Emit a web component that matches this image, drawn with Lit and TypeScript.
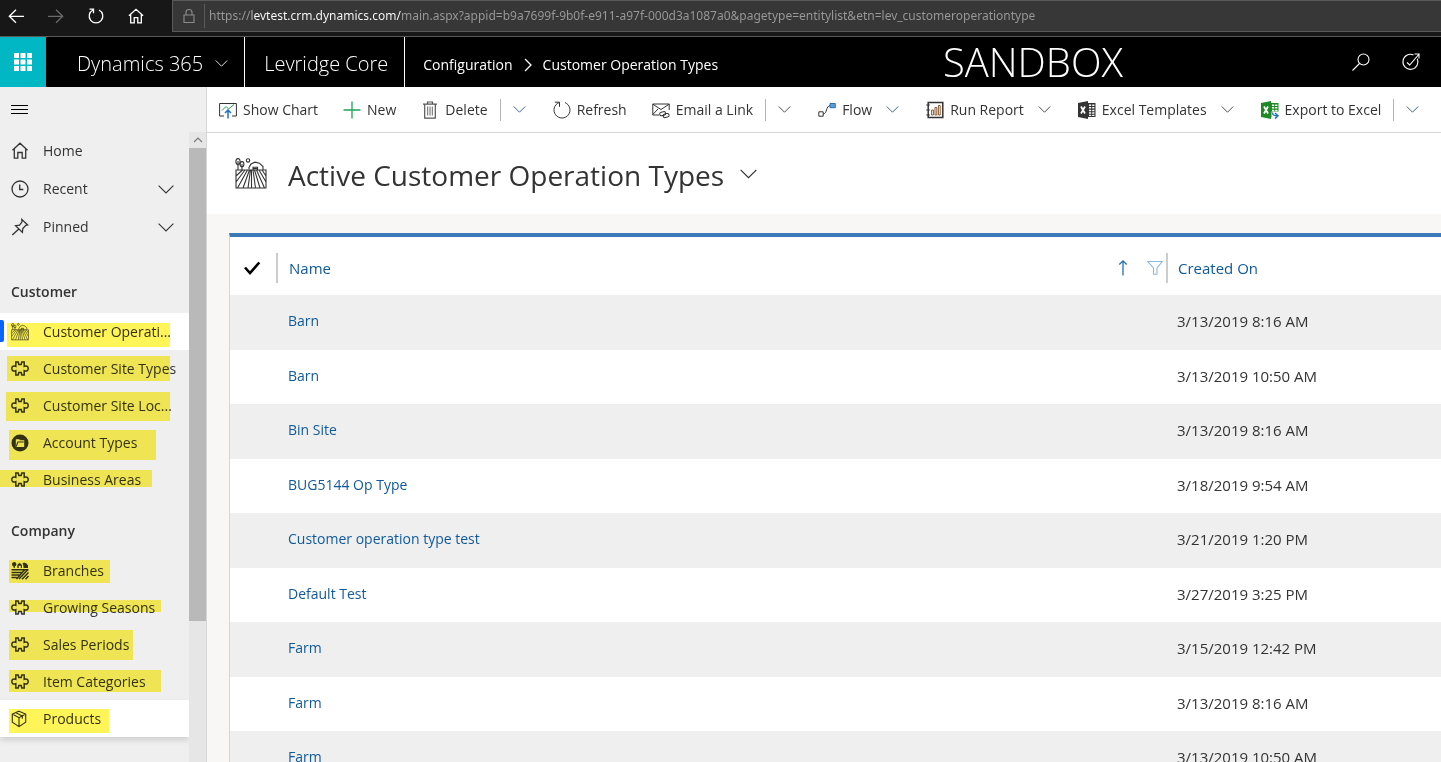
import { LitElement, html, css, svg, TemplateResult } from "lit";
import { customElement } from "lit/decorators.js";
import { classMap } from "lit/directives/class-map.js";
import { styleMap } from "lit/directives/style-map.js";

type Mark = { x: number; y: number; w: number; h: number };
type NavItem = { label: string; icon: keyof typeof icons; mark: Mark; state?: string };

const draw = (box: string, size: number, body: unknown) =>
  html`<svg class="icon" viewBox=${box} width=${size} height=${size} aria-hidden="true">${body}</svg>`;

const chevron = (w: number) =>
  html`<svg class="icon chev" viewBox="0 0 16 9" width=${w} height=${Math.round((w * 9) / 16)} aria-hidden="true">
    <path d="M.6.6 8 8 15.4.6" />
  </svg>`;

const farm = svg`
  <ellipse cx="3" cy="3.6" rx="2.1" ry="3" /><path d="M3 3v9" />
  <ellipse cx="7" cy="6.2" rx="1.9" ry="2.6" /><path d="M7 6v6" />
  <circle cx="13" cy="2.4" r="1.7" />
  <path d="M14 11.500V9.500l2-3.500 4-1.800 4.500 1 3.500 3.300V12M18 12V9.300h4.500V12M18 10.600h4.500" />
  <path d="M1 12h30v18H1zM14.500 12 8 30M12.500 12 2.500 30M10 12 1 24M7.500 12 1 18M15.500 12 13 30M16.500 12v18M18 12l2.500 18M19.500 12 25 30M21.500 12l8 18M24 12l7 12M27 12l4 6" />`;

const puzzle = svg`<path stroke-width="1.500" d="M4.800 2h2.400l.6 2.500h2.400L10.800 2h2.400v4.300c3-1.200 4 .7 4 2.200s-1 3.400-4 2.200V15h-2.400l-.6-2.500H7.800L7.200 15H4.800v-4.300c-3 1.200-4-.7-4-2.200s1-3.400 4-2.200z" />`;

const icons = {
  home: svg`<path stroke-width="1.300" d="M1.500 8.200 9 1.200l7.500 7M3.300 6.800v9.400h3.500v-5.700h4.400v5.700h3.500V6.800" />`,
  clock: svg`<circle cx="9" cy="9" r="8" stroke-width="1.300" /><path stroke-width="1.300" d="M8.700 4.500v5h3.600" />`,
  pin: svg`<path stroke-width="1.300" d="m10.800 1.400 5.800 5.600-1.800.4-3 3.100-.4 3.900-6.800-6.700 4-.5 2.400-3.300zM7.800 11 1.300 17" />`,
  farm,
  puzzle,
  folder: svg`<path class="solid" fill-rule="evenodd" d="M9 .5a8.500 8.500 0 1 1 0 17 8.500 8.500 0 0 1 0-17zM4.800 5.300h3.400l1 1h4V13H4.800z" /><path d="M5.300 12.500 6.800 8h6" />`,
  field: svg`
    <path class="solid" d="M3.200 0a2.300 2.300 0 0 1 .6 4.500V6H2.600V4.500A2.300 2.300 0 0 1 3.200 0zM6.300 6V3l2.200-2.200L11 3v3H9.800V3.800H7.700V6zM11.500 1.500 13 .6l2.500 1 1.500 2V6h-4.500V4z" />
    <path class="bar" d="M.5 7.800h17M.5 10.400h10.300M.5 13h7.700M.5 15.600h5.200M16.500 8 8 17M17.500 10.500 11 17.200M17.500 14l-3 3.300M13.500 8l-8 9" />`,
  box: svg`<path d="M8 1.200 14.700 4v8.200L8 16.600 1.300 12.200V4zM1.300 4 8 7.700 14.700 4M8 7.700v8.900M4.600 2.600l6.700 3.500v2.700" />`,
};

const groups: { title: string; items: NavItem[] }[] = [
  {
    title: "Customer",
    items: [
      { label: "Customer Operati...", icon: "farm", mark: { x: 7, y: 10, w: 163, h: 24 }, state: "current" },
      { label: "Customer Site Types", icon: "puzzle", mark: { x: 7, y: 6, w: 163, h: 25 } },
      { label: "Customer Site Loc...", icon: "puzzle", mark: { x: 6, y: 5, w: 164, h: 29 } },
      { label: "Account Types", icon: "folder", mark: { x: 9, y: 6, w: 147, h: 30 } },
      { label: "Business Areas", icon: "puzzle", mark: { x: 0, y: 9, w: 152, h: 17 } },
    ],
  },
  {
    title: "Company",
    items: [
      { label: "Branches", icon: "field", mark: { x: 9, y: 8, w: 101, h: 23 } },
      { label: "Growing Seasons", icon: "puzzle", mark: { x: 9, y: 11, w: 152, h: 12 } },
      { label: "Sales Periods", icon: "puzzle", mark: { x: 9, y: 4, w: 124, h: 30 } },
      { label: "Item Categories", icon: "puzzle", mark: { x: 9, y: 7, w: 152, h: 22 } },
      { label: "Products", icon: "box", mark: { x: 9, y: 9, w: 100, h: 24 }, state: "hover" },
    ],
  },
];

const records = [
  ["Barn", "3/13/2019 8:16 AM"],
  ["Barn", "3/13/2019 10:50 AM"],
  ["Bin Site", "3/13/2019 8:16 AM"],
  ["BUG5144 Op Type", "3/18/2019 9:54 AM"],
  ["Customer operation type test", "3/21/2019 1:20 PM"],
  ["Default Test", "3/27/2019 3:25 PM"],
  ["Farm", "3/15/2019 12:42 PM"],
  ["Farm", "3/13/2019 8:16 AM"],
  ["Farm", "3/13/2019 10:50 AM"],
];

const excel = (color: string, extra: unknown) => svg`
  <g stroke="none"><path fill=${color} d="M0 2 10 0v18L0 16z" />
  <path fill=${color} fill-rule="evenodd" d="M10 2h7.500v14H10zm1 1.500V5h2.200V3.500zm3.200 0V5h2.200V3.500zM11 6.100v1.500h2.200V6.100zm3.200 0v1.500h2.200V6.100zM11 8.700v1.500h2.200V8.700zm3.200 0v1.500h2.200V8.700zM11 11.300v1.500h2.200v-1.500zm3.200 0v1.500h2.200v-1.500zM11 13.700V15h2.200v-1.300zm3.200 0V15h2.200v-1.300z" /></g>
  <path stroke="#fff" stroke-width="1.700" d="m3 5.500 4 7M7 5.500l-4 7" />${extra}`;

const commands: { label: string; art: TemplateResult | unknown; menu?: string }[] = [
  {
    label: "Show Chart",
    art: svg`<path d="M5 15H.6V2.500h16.800V15H13" /><path stroke="#2a9d57" d="m3 9.500 4-4L9.500 8 15 3.500" /><path stroke="#2472b8" stroke-width="1.500" d="M9 17.500v-8M6 12l3-3 3 3" />`,
  },
  { label: "New", art: svg`<path stroke="#21a35a" stroke-width="1.300" d="M9 .5v17M.5 9h17" />` },
  {
    label: "Delete",
    art: svg`<path stroke="#555" stroke-width="1.200" d="M2 3.200h14M3.700 3.200v14h10.600v-14M6.500 3V1h5v2" /><path stroke="#666" d="M6.700 5.500v9M9 5.500v9M11.300 5.500v9" />`,
    menu: "split blue",
  },
  { label: "Refresh", art: svg`<path d="M6 1.600A8 8 0 1 0 12 1.600M1.800 1.200H6.500v4.600" />` },
  {
    label: "Email a Link",
    art: svg`<path d="M7 14H.8V3h16.400v6M.8 3.200 9 8.500l8.200-5.300M.8 13.500 6 8" /><rect x="7.500" y="11" width="6" height="3.600" rx="1.800" transform="rotate(-12 10 12)" /><rect x="11" y="12.800" width="6" height="3.600" rx="1.800" transform="rotate(-12 14 14)" />`,
    menu: "split",
  },
  {
    label: "Flow",
    art: svg`<path d="M.8 10.800h4.400v4.400H.8zM5.200 13c4 0 2.500-8 7-8.500" /><path stroke="#2472b8" fill="#5c9fd8" d="M12 2.500h5.300v4.200H12z" />`,
    menu: "blue",
  },
  {
    label: "Run Report",
    art: svg`<path stroke-width="1.500" d="M2.200 1.500h14.600v15H2.200z" /><path d="M.3 4h3.500M.3 9h3.500M.3 14h3.500" /><path stroke="#8a5a30" d="M5.600 9h1.800v5H5.600zM9 6.500h1.800V14H9zM12.400 4.500h1.800V14h-1.800z" />`,
    menu: "plain",
  },
  { label: "Excel Templates", art: excel("#333", ""), menu: "plain" },
  {
    label: "Export to Excel",
    art: excel("#1e8a25", svg`<path fill="#fff" stroke="none" d="M10.500 10.500H18V18h-7.500z" /><path stroke="#2472b8" stroke-width="1.500" d="M11.500 11.500c0 2.500 1 3.300 5 3.300M14 12l3 2.800-3 2.800" />`),
    menu: "split blue",
  },
];

@customElement("app-root")
export class AppRoot extends LitElement {
  static styles = css`
    :host {
      display: flex;
      flex-direction: column;
      height: 100vh;
      overflow: hidden;
      font: 14px/20px "Open Sans", "Noto Sans", sans-serif;
      color: #333;
      background: #fff;
    }
    * { box-sizing: border-box; }
    button {
      font: inherit;
      color: inherit;
      background: none;
      border: 0;
      padding: 0;
      display: flex;
      align-items: center;
      cursor: pointer;
    }
    a { color: inherit; text-decoration: none; }
    .icon {
      display: block;
      flex: none;
      overflow: visible;
      fill: none;
      stroke: currentColor;
      stroke-width: 1.1;
    }
    .solid { fill: currentColor; stroke: none; }
    .bar { stroke-width: 1.5; }

    .browser {
      display: flex;
      flex: none;
      height: 37px;
      background: #171717;
      border-bottom: 1px solid #5a5a5a;
      color: #fff;
    }
    .tools { display: flex; gap: 24px; width: 172px; padding: 0 8px 4px; flex: none; }
    .tools .off { color: #6a6a6a; }
    .address {
      flex: 1;
      display: flex;
      align-items: center;
      height: 32px;
      background: #373737;
      border: 1px solid #5a5a5a;
      border-right: 0;
      color: #8c8c8c;
    }
    .lock { width: 31px; padding-left: 9px; }
    .url {
      flex: 1;
      height: 24px;
      border: 0;
      border-left: 1px solid #5a5a5a;
      outline: 0;
      padding: 0 4px;
      font: 12px/24px "Noto Sans", sans-serif;
      color: transparent;
      background: linear-gradient(90deg, #9a9a9a 47px, #fff 47px, #fff 196px, #9a9a9a 196px);
      -webkit-background-clip: text;
      background-clip: text;
    }

    .top {
      display: flex;
      flex: none;
      height: 50px;
      background: #000;
      color: #fff;
    }
    .waffle { width: 46px; background: #00b7c3; justify-content: center; flex: none; }
    .brand {
      display: flex;
      align-items: center;
      gap: 12px;
      padding: 3px 16px 0 19px;
      border-right: 1px solid #fff;
      font-size: 20px;
      font-weight: 300;
      white-space: nowrap;
    }
    .brand.first { padding-left: 31px; }
    .crumbs { display: flex; align-items: center; gap: 8px; padding: 5px 18px 0; white-space: nowrap; }
    .right { display: flex; margin-left: auto; align-items: center; gap: 32px; padding-right: 21px; }
    .sandbox { font-size: 40px; line-height: 50px; font-weight: 300; margin-right: 197px; }

    .body { flex: 1; display: flex; min-height: 0; }
    .side {
      width: 207px;
      flex: none;
      display: flex;
      flex-direction: column;
      background: #efefef;
      border-right: 1px solid #d6d6d6;
    }
    .burger { height: 45px; padding-left: 10px; color: #000; flex: none; }
    .scroller { flex: 1; display: flex; min-height: 0; }
    .nav { flex: 1; min-width: 0; overflow: hidden; }
    .track { width: 17px; background: #e6e6e6; display: flex; flex-direction: column; align-items: stretch; }
    .up { height: 16px; justify-content: center; color: #777; }
    .thumb { flex: 0 0 75%; background: #b9b9b9; }
    .row {
      position: relative;
      display: flex;
      align-items: center;
      width: 100%;
      height: 38px;
      gap: 14px;
      padding-left: 11px;
      white-space: nowrap;
    }
    .row .slot { width: 18px; flex: none; }
    .row .chev { margin-left: auto; margin-right: 15px; }
    .entry { height: 37px; }
    .current { background: #fff; }
    .current::before {
      content: "";
      position: absolute;
      left: 0;
      top: 7px;
      width: 4px;
      height: 22px;
      background: #0a64ff;
      border-radius: 0 2px 2px 0;
    }
    .hover { background: #fff; box-shadow: 0 3px 6px rgba(0, 0, 0, 0.14); }
    .mark { position: absolute; background: #fff559; mix-blend-mode: multiply; }
    .group {
      margin: 12px 0 0;
      padding-left: 11px;
      font-size: 14px;
      line-height: 42px;
      font-weight: 600;
    }
    .list { margin: 0; padding: 0; list-style: none; }
    .quick { padding-bottom: 13px; }

    .main { flex: 1; min-width: 0; display: flex; flex-direction: column; }
    .commands {
      display: flex;
      align-items: center;
      flex: none;
      height: 46px;
      padding-left: 12px;
      gap: 25px;
      border-bottom: 1px solid #d6d6d6;
      white-space: nowrap;
    }
    .command { display: flex; align-items: center; gap: 12px; }
    .action { gap: 6px; height: 34px; }
    .action .icon { stroke-width: 1; }
    .menu { height: 22px; padding-right: 2px; }
    .plain .menu, .blue:not(.split) .menu { padding-left: 2px; }
    .split .menu { border-left: 1px solid #b3b3b3; padding-left: 12px; }
    .blue .menu { color: #1f4f80; }
    .title { display: flex; align-items: center; gap: 21px; height: 81px; padding: 0 28px; flex: none; }
    h1 { margin: 0; font-size: 28px; line-height: 40px; font-weight: 400; padding-top: 2px; }
    .heading { display: flex; align-items: center; gap: 16px; }
    .canvas { flex: 1; min-height: 0; overflow: hidden; background: #f8f7f5; padding: 19px 0 0 22px; }
    table {
      width: 100%;
      table-layout: fixed;
      border-collapse: separate;
      border-spacing: 0;
      background: #fff;
      border-top: 4px solid #3b79b7;
      border-left: 1px solid #d6d6d6;
    }
    th { height: 58px; padding: 4px 0 0; font-size: 15px; font-weight: 400; text-align: left; color: #10599a; }
    td { height: 54px; padding: 0 0 3px; }
    tbody tr:nth-child(odd) td { height: 55px; background: #efefef; }
    .check { width: 48px; }
    .when { width: 273px; }
    .cell {
      display: flex;
      align-items: center;
      height: 30px;
      border-right: 2px solid #ccc;
    }
    .pick { padding-left: 14px; color: #000; }
    .pick input { position: absolute; opacity: 0; width: 16px; height: 16px; margin: 0; }
    .name { padding-left: 11px; gap: 16px; color: #10599a; }
    .name .label { flex: 1; }
    .name .filter { color: #8fb8da; padding-right: 3px; }
    .created { padding-left: 10px; border: 0; }
    .link { padding-left: 10px; color: #10599a; }
    .date { padding-left: 9px; font-size: 15px; }
  `;

  private navRow(item: NavItem) {
    const m = item.mark;
    return html`<li>
      <a href="#" class=${classMap({ row: true, entry: true, current: item.state === "current", hover: item.state === "hover" })}>
        <span class="slot">${draw(item.icon === "farm" ? "0 0 32 32" : "0 0 18 18", 18, icons[item.icon])}</span>
        <span>${item.label}</span>
        <span class="mark" style=${styleMap({ left: `${m.x}px`, top: `${m.y}px`, width: `${m.w}px`, height: `${m.h}px` })}></span>
      </a>
    </li>`;
  }

  render() {
    return html`
      <div class="browser">
        <div class="tools">
          <button aria-label="Back">${draw("0 0 16 16", 16, svg`<path stroke-width="1.300" d="M16 8.300H1.500M8 1.800 1.300 8.300 8 14.800" />`)}</button>
          <button class="off" aria-label="Forward">${draw("0 0 16 16", 16, svg`<path stroke-width="1.300" d="M0 8.300h14.500M8 1.800l6.700 6.500L8 14.800" />`)}</button>
          <button aria-label="Reload">${draw("0 0 16 16", 16, svg`<path stroke-width="1.300" d="M5 2a6.800 6.800 0 1 0 6 0M1.500 1.200h4v4" />`)}</button>
          <button aria-label="Home page">${draw("0 0 18 18", 16, svg`<path stroke-width="1.500" d="M1 8.800 9 1.500l8 7.300M3 7.200v9.600h4v-6h4v6h4V7.200" />`)}</button>
        </div>
        <div class="address">
          <span class="lock">${draw("0 0 14 14", 14, svg`<path d="M2 6h10v7.500H2zM4 6V3.500a3 3 0 0 1 6 0V6" />`)}</span>
          <input class="url" aria-label="Address" spellcheck="false"
            value="https://levtest.crm.dynamics.com/main.aspx?appid=b9a7699f-9b0f-e911-a97f-000d3a1087a0&amp;pagetype=entitylist&amp;etn=lev_customeroperationtype" />
        </div>
      </div>

      <header class="top">
        <button class="waffle" aria-label="App launcher">
          ${draw("0 0 18 18", 18, svg`<path class="solid" d="M0 0h5v5H0zM6.500 0h5v5h-5zM13 0h5v5h-5zM0 6.500h5v5H0zM6.500 6.500h5v5h-5zM13 6.500h5v5h-5zM0 13h5v5H0zM6.500 13h5v5h-5zM13 13h5v5h-5z" />`)}
        </button>
        <button class="brand first">Dynamics 365 ${chevron(13)}</button>
        <a class="brand" href="#">Levridge Core</a>
        <nav class="crumbs">
          <a href="#">Configuration</a>
          ${draw("0 0 14 14", 14, svg`<path stroke-width="1.300" d="m4 1 6 6-6 6" />`)}
          <a href="#">Customer Operation Types</a>
        </nav>
        <div class="right">
          <span class="sandbox">SANDBOX</span>
          <button aria-label="Search">${draw("0 0 18 18", 18, svg`<circle cx="11.500" cy="6.500" r="5.500" /><path d="M7.500 10.500.5 17.500" />`)}</button>
          <button aria-label="Assistant">${draw("0 0 18 18", 18, svg`<path d="M11.500 2a7.500 7.500 0 1 0 3.800 3.800M5 9.500 7.700 12l9-10.500M12.500 1H17v4.500" />`)}</button>
        </div>
      </header>

      <div class="body">
        <aside class="side">
          <button class="burger" aria-label="Toggle navigation">${draw("0 0 18 18", 18, svg`<path d="M1 4.500h17M1 8.500h17M1 12.500h17" />`)}</button>
          <div class="scroller">
            <nav class="nav">
              <div class="quick">
                <a class="row" href="#"><span class="slot">${draw("0 0 18 18", 18, icons.home)}</span>Home</a>
                <button class="row"><span class="slot">${draw("0 0 18 18", 18, icons.clock)}</span>Recent ${chevron(16)}</button>
                <button class="row"><span class="slot">${draw("0 0 18 18", 18, icons.pin)}</span>Pinned ${chevron(16)}</button>
              </div>
              ${groups.map(
                (g) => html`<h2 class="group">${g.title}</h2>
                  <ul class="list">${g.items.map((i) => this.navRow(i))}</ul>`
              )}
            </nav>
            <div class="track">
              <button class="up" aria-label="Scroll up">${draw("0 0 8 8", 8, svg`<path d="M0 6l4-4 4 4" />`)}</button>
              <div class="thumb"></div>
            </div>
          </div>
        </aside>

        <main class="main">
          <div class="commands">
            ${commands.map(
              (c) => html`<div class="command ${c.menu ?? ""}">
                <button class="action">${draw("0 0 18 18", 18, c.art)}<span>${c.label}</span></button>
                ${c.menu ? html`<button class="menu" aria-label="${c.label} options">${chevron(13)}</button>` : ""}
              </div>`
            )}
          </div>
          <div class="title">
            ${draw("0 0 32 32", 32, farm)}
            <button class="heading"><h1>Active Customer Operation Types</h1>${chevron(17)}</button>
          </div>
          <div class="canvas">
            <table>
              <thead>
                <tr>
                  <th class="check">
                    <label class="cell pick"><input type="checkbox" checked aria-label="Select all" />${draw("0 0 16 16", 16, svg`<path stroke-width="2.600" d="m1 7.500 5 5.500L15.300 2.500" />`)}</label>
                  </th>
                  <th>
                    <div class="cell name">
                      <span class="label">Name</span>
                      ${draw("0 0 16 16", 16, svg`<path stroke="#2472b0" stroke-width="1.300" d="M8 15.500V.8M4.300 4.500 8 .8l3.700 3.700" />`)}
                      <button class="filter" aria-label="Filter by name">${draw("0 0 16 16", 16, svg`<path d="M.8 1.500h14.400L10 8v6.200H6.500V8z" />`)}</button>
                    </div>
                  </th>
                  <th class="when"><div class="cell created">Created On</div></th>
                </tr>
              </thead>
              <tbody>
                ${records.map(
                  ([name, date]) => html`<tr>
                    <td></td>
                    <td class="link"><a href="#">${name}</a></td>
                    <td class="date">${date}</td>
                  </tr>`
                )}
              </tbody>
            </table>
          </div>
        </main>
      </div>
    `;
  }
}
